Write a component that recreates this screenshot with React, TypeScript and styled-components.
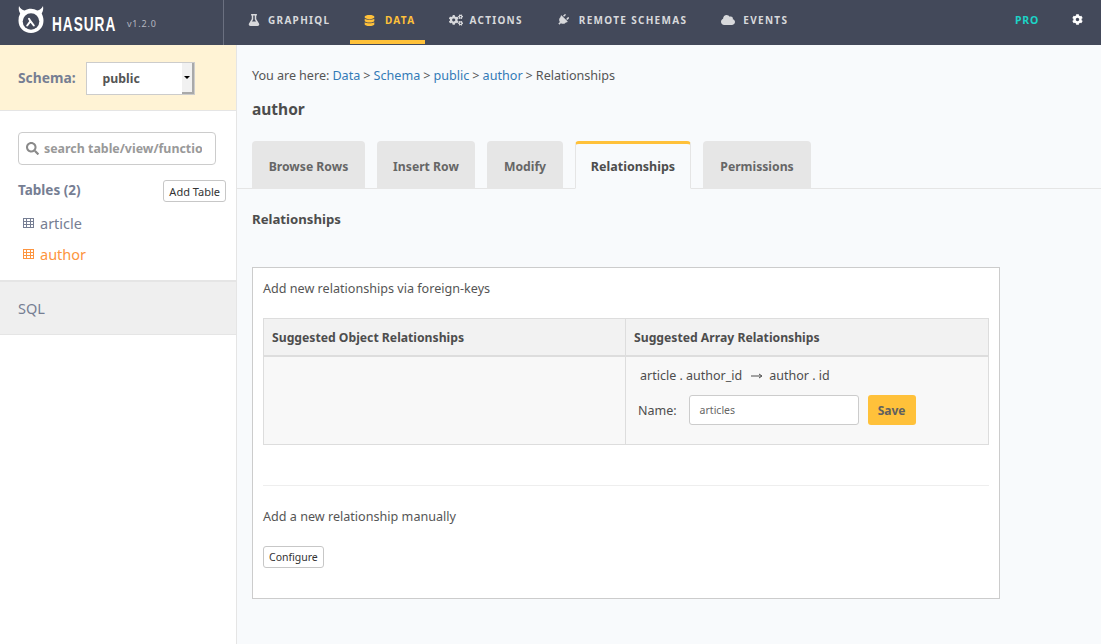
import React from "react";
import styled, { createGlobalStyle } from "styled-components";
import { FaFlask, FaDatabase, FaCogs, FaPlug, FaCloud, FaCog, FaSearch } from "react-icons/fa";

const FONT = `"Noto Sans", "Liberation Sans", sans-serif`;

const Global = createGlobalStyle`
  html, body { margin: 0; padding: 0; height: 100%; }
  body { font-family: ${FONT}; background: #f8fafc; color: #4d4d4d; }
  * { box-sizing: border-box; }
`;

const Shell = styled.div`
  width: 1101px;
  height: 644px;
  overflow: hidden;
  display: flex;
  flex-direction: column;
`;
const TopBar = styled.header`
  height: 45px;
  background: #43495a;
  display: flex;
  flex: none;
`;
const Brand = styled.div`
  width: 224px;
  height: 45px;
  border-right: 1px solid #6b7080;
  display: flex;
  align-items: center;
  padding: 0 0 5px 18px;
  flex: none;
`;
const BrandName = styled.span`
  font-family: "Liberation Sans", sans-serif;
  font-weight: 700;
  font-size: 21px;
  line-height: 24px;
  letter-spacing: 1.5px;
  color: #fff;
  margin: 7px 0 0 8px;
  transform: scaleX(0.65);
  transform-origin: left center;
  width: 64px;
  white-space: nowrap;
`;
const Version = styled.span`
  font-size: 9px;
  letter-spacing: 0.8px;
  color: #b5b8c0;
  margin: 7px 0 0 11px;
`;
const Nav = styled.nav`
  display: flex;
  flex: 1;
  padding-left: 10px;
  gap: 10px;
`;
const NavItem = styled.a<{ $active?: boolean }>`
  display: flex;
  align-items: center;
  height: 44px;
  padding: 0 10px 0 14px;
  border-bottom: 4px solid ${(p) => (p.$active ? "#ffc13a" : "transparent")};
  color: ${(p) => (p.$active ? "#ffc13a" : "#d8d9dc")};
  font-size: 10px;
  font-weight: 700;
  letter-spacing: 1.3px;
  text-transform: uppercase;
  white-space: nowrap;
`;
const NavIcon = styled.span<{ $w: number; $turn?: boolean }>`
  width: ${(p) => p.$w}px;
  flex: none;
  display: flex;
  align-items: center;
  & svg {
    ${(p) => (p.$turn ? "transform: rotate(45deg);" : "")}
  }
`;
const Pro = styled.span`
  color: #1cd3c6;
  font-size: 10.5px;
  font-weight: 700;
  letter-spacing: 0.8px;
  margin: 0 23px 5px auto;
  align-self: center;
`;
const Gear = styled.span`
  color: #fff;
  display: flex;
  align-self: center;
  margin: 0 18px 6px 0;
`;
const Body = styled.div`
  display: flex;
  flex: 1;
  min-height: 0;
`;
const Sidebar = styled.aside`
  width: 237px;
  flex: none;
  background: #fff;
  border-right: 1px solid #e5e5e5;
`;
const SchemaBar = styled.div`
  height: 66px;
  background: #fff3d5;
  border-bottom: 1px solid #e5e5e5;
  display: flex;
  align-items: center;
  padding: 0 0 0 18px;
  gap: 10px;
`;
const SchemaLabel = styled.span`
  font-size: 13.8px;
  font-weight: 700;
  color: #767e93;
`;
const SchemaSelect = styled.div`
  width: 109px;
  height: 33px;
  margin-top: 2px;
  background: #fff;
  border: 1px solid #ccc;
  display: flex;
  align-items: center;
  padding-left: 16px;
  position: relative;
  font-size: 12.3px;
  font-weight: 700;
  color: #555;
`;
const SelectArrow = styled.span`
  position: absolute;
  right: 0;
  top: 0;
  bottom: 0;
  width: 12px;
  background: #f1f1f1;
  border-right: 2px solid #a9a9a9;
  border-bottom: 2px solid #a9a9a9;
  display: flex;
  align-items: center;
  justify-content: center;
  &::after {
    content: "";
    border-left: 3px solid transparent;
    border-right: 3px solid transparent;
    border-top: 3px solid #000;
  }
`;
const SideBody = styled.div`
  padding: 21px 10px 0 18px;
`;
const SearchBox = styled.div`
  width: 198px;
  height: 33px;
  border: 1px solid #ccc;
  border-radius: 4px;
  display: flex;
  align-items: center;
  padding-left: 7px;
  gap: 5px;
  color: #999;
  font-size: 12.4px;
  font-weight: 700;
  overflow: hidden;
  white-space: nowrap;
`;
const SearchText = styled.span`
  width: 158px;
  overflow: hidden;
`;
const TablesHead = styled.div`
  display: flex;
  justify-content: space-between;
  align-items: center;
  margin-top: 15px;
`;
const TablesTitle = styled.span`
  font-size: 13.5px;
  font-weight: 700;
  color: #767e93;
  padding-bottom: 2px;
`;
const SmallButton = styled.button`
  font-family: ${FONT};
  background: #fff;
  border: 1px solid #c7c7c7;
  border-radius: 3px;
  color: #333;
  height: 22px;
  padding: 0 5px;
  font-size: 10.5px;
  display: inline-flex;
  align-items: center;
`;
const AddTableButton = styled(SmallButton)`
  font-size: 11px;
`;
const TableList = styled.ul`
  list-style: none;
  margin: 5px 0 0;
  padding: 0 0 0 5px;
`;
const TableRow = styled.li<{ $active?: boolean }>`
  height: 31px;
  display: flex;
  align-items: center;
  gap: 6px;
  font-size: 14.5px;
  color: ${(p) => (p.$active ? "#fd9540" : "#767e93")};
`;
const SqlRow = styled.div`
  margin-top: 11px;
  height: 55px;
  background: #efefef;
  border-top: 2px solid #e5e5e5;
  border-bottom: 1px solid #e5e5e5;
  display: flex;
  align-items: center;
  padding-left: 18px;
  font-size: 14.5px;
  color: #767e93;
`;
const Main = styled.main`
  flex: 1;
  min-width: 0;
`;
const MainHead = styled.div`
  padding: 22px 15px 0;
`;
const Crumbs = styled.div`
  font-size: 12.6px;
  word-spacing: -0.25px;
  line-height: 18px;
  color: #555;
  white-space: nowrap;
`;
const Crumb = styled.a`
  color: #337ab7;
`;
const Title = styled.h2`
  margin: 13px 0 0;
  font-size: 15.5px;
  font-weight: 700;
  line-height: 22px;
  color: #4d4d4d;
`;
const Tabs = styled.div`
  display: flex;
  height: 48px;
  margin-top: 21px;
  padding-left: 15px;
  gap: 12px;
  border-bottom: 1px solid #e5e5e5;
`;
const Tab = styled.div<{ $active?: boolean; $w: number }>`
  width: ${(p) => p.$w}px;
  height: 48px;
  padding-top: 2px;
  border-radius: 4px 4px 0 0;
  display: flex;
  align-items: center;
  justify-content: center;
  font-size: 12.2px;
  font-weight: 700;
  white-space: nowrap;
  color: ${(p) => (p.$active ? "#4d4d4d" : "#666")};
  background: ${(p) => (p.$active ? "#f8fafc" : "#e6e6e6")};
  ${(p) =>
    p.$active
      ? `padding-top: 0; font-size: 12.5px; border: 1px solid #e5e5e5; border-top: 3px solid #ffc13a; border-bottom: 1px solid #f8fafc;`
      : ""}
`;
const Section = styled.div`
  padding: 19px 15px 0;
`;
const SectionTitle = styled.h4`
  margin: 0;
  font-size: 13.2px;
  line-height: 22px;
  font-weight: 700;
  color: #4d4d4d;
`;
const Card = styled.div`
  width: 748px;
  height: 332px;
  margin-top: 37px;
  background: #fff;
  border: 1px solid #ccc;
  padding: 12px 10px;
  font-size: 12.6px;
  color: #555;
`;
const CardLine = styled.div`
  line-height: 18px;
`;
const RelTable = styled.div`
  margin-top: 20px;
  width: 726px;
  display: grid;
  grid-template-columns: 362px 1fr;
  border: 1px solid #ddd;
  background: #f8f8f8;
`;
const HeadCell = styled.div<{ $last?: boolean }>`
  height: 38px;
  background: #f2f2f2;
  border-bottom: 2px solid #ddd;
  border-right: ${(p) => (p.$last ? "none" : "1px solid #ddd")};
  display: flex;
  align-items: center;
  padding-left: 8px;
  font-size: 12.2px;
  font-weight: 700;
  color: #4d4d4d;
`;
const BodyCell = styled.div<{ $last?: boolean }>`
  height: 87px;
  border-right: ${(p) => (p.$last ? "none" : "1px solid #ddd")};
  padding: 10px 0 0 12px;
`;
const FkLine = styled.div`
  display: flex;
  align-items: center;
  line-height: 18px;
  padding-left: 2px;
  color: #4d4d4d;
  font-size: 12.5px;
`;
const Arrow = styled.svg`
  margin: 0 6px 0 9px;
`;
const NameRow = styled.div`
  display: flex;
  align-items: center;
  margin-top: 10px;
  color: #4d4d4d;
  font-size: 12.5px;
`;
const NameInput = styled.div`
  width: 170px;
  height: 30px;
  margin-left: 12px;
  background: #fff;
  border: 1px solid #ccc;
  border-radius: 3px;
  display: flex;
  align-items: center;
  padding-left: 10px;
  font-size: 10.5px;
  color: #666;
`;
const SaveButton = styled.button`
  font-family: ${FONT};
  margin-left: 9px;
  width: 48px;
  height: 30px;
  background: #ffc13a;
  border: none;
  border-radius: 3px;
  font-size: 12px;
  font-weight: 700;
  color: #606060;
`;
const Divider = styled.hr`
  border: 0;
  border-top: 1px solid #eee;
  margin: 40px 0 22px;
  width: 726px;
`;
const ConfigureWrap = styled.div`
  margin-top: 20px;
`;

const Logo = () => (
  <svg width="26" height="28" viewBox="0 0 26 28" style={{ flex: "none" }}>
    <path
      d="M1 0c-.6 3-.2 5.300 1.200 7.400A12.400 12.400 0 0 0 .500 14.800C.500 22 6.100 27 13 27s12.500-5 12.500-12.200c0-2.800-.7-5.300-1.800-7.400C25.100 5.300 25.500 3 25 0c-1.300 2.500-3.200 4-5.700 4.400A12.500 12.500 0 0 0 13 2.700c-2.300 0-4.400.6-6.300 1.700C4.200 4 2.300 2.500 1 0z"
      fill="#fff"
    />
    <circle cx="13" cy="15.500" r="8.300" fill="#43495a" />
    <path
      d="M9.200 19.500l3.300-4.300-1.500-2.400M12.500 15.200l3.300 4.300"
      stroke="#fff"
      strokeWidth="2"
      fill="none"
      strokeLinecap="round"
      strokeLinejoin="round"
    />
  </svg>
);

const TableGlyph = () => (
  <svg width="11" height="10" viewBox="0 0 11 10" fill="none" stroke="currentColor" strokeWidth="1" style={{ flex: "none" }}>
    <rect x="0.5" y="0.5" width="10" height="9" />
    <path d="M0 3.500h11M0 6.500h11M3.500 0v10M7.500 0v10" />
  </svg>
);

export default function App() {
  return (
    <Shell>
      <Global />
      <TopBar>
        <Brand>
          <Logo />
          <BrandName>HASURA</BrandName>
          <Version>v1.2.0</Version>
        </Brand>
        <Nav>
          <NavItem><NavIcon $w={20}><FaFlask size={12} /></NavIcon>GraphiQL</NavItem>
          <NavItem $active><NavIcon $w={20.500}><FaDatabase size={11} /></NavIcon>Data</NavItem>
          <NavItem><NavIcon $w={20}><FaCogs size={14} /></NavIcon>Actions</NavItem>
          <NavItem><NavIcon $w={22} $turn><FaPlug size={12} /></NavIcon>Remote Schemas</NavItem>
          <NavItem><NavIcon $w={22}><FaCloud size={14} /></NavIcon>Events</NavItem>
          <Pro>PRO</Pro>
          <Gear><FaCog size={11} /></Gear>
        </Nav>
      </TopBar>
      <Body>
        <Sidebar>
          <SchemaBar>
            <SchemaLabel>Schema:</SchemaLabel>
            <SchemaSelect>public<SelectArrow /></SchemaSelect>
          </SchemaBar>
          <SideBody>
            <SearchBox>
              <FaSearch size={13} color="#8a8a8a" />
              <SearchText>search table/view/function</SearchText>
            </SearchBox>
            <TablesHead>
              <TablesTitle>Tables (2)</TablesTitle>
              <AddTableButton>Add Table</AddTableButton>
            </TablesHead>
            <TableList>
              <TableRow><TableGlyph />article</TableRow>
              <TableRow $active><TableGlyph />author</TableRow>
            </TableList>
          </SideBody>
          <SqlRow>SQL</SqlRow>
        </Sidebar>
        <Main>
          <MainHead>
            <Crumbs>
              You are here: <Crumb>Data</Crumb> &gt; <Crumb>Schema</Crumb> &gt; <Crumb>public</Crumb> &gt; <Crumb>author</Crumb> &gt; Relationships
            </Crumbs>
            <Title>author</Title>
          </MainHead>
          <Tabs>
            <Tab $w={113}>Browse Rows</Tab>
            <Tab $w={98}>Insert Row</Tab>
            <Tab $w={76}>Modify</Tab>
            <Tab $w={116} $active>Relationships</Tab>
            <Tab $w={108}>Permissions</Tab>
          </Tabs>
          <Section>
            <SectionTitle>Relationships</SectionTitle>
            <Card>
              <CardLine>Add new relationships via foreign-keys</CardLine>
              <RelTable>
                <HeadCell>Suggested Object Relationships</HeadCell>
                <HeadCell $last>Suggested Array Relationships</HeadCell>
                <BodyCell />
                <BodyCell $last>
                  <FkLine>
                    article . author_id
                    <Arrow width="12" height="8" viewBox="0 0 12 8">
                      <path d="M0 4h10M8 2l3 2-3 2" stroke="#4d4d4d" fill="none" />
                    </Arrow>
                    author . id
                  </FkLine>
                  <NameRow>
                    Name:
                    <NameInput>articles</NameInput>
                    <SaveButton>Save</SaveButton>
                  </NameRow>
                </BodyCell>
              </RelTable>
              <Divider />
              <CardLine>Add a new relationship manually</CardLine>
              <ConfigureWrap><SmallButton>Configure</SmallButton></ConfigureWrap>
            </Card>
          </Section>
        </Main>
      </Body>
    </Shell>
  );
}
